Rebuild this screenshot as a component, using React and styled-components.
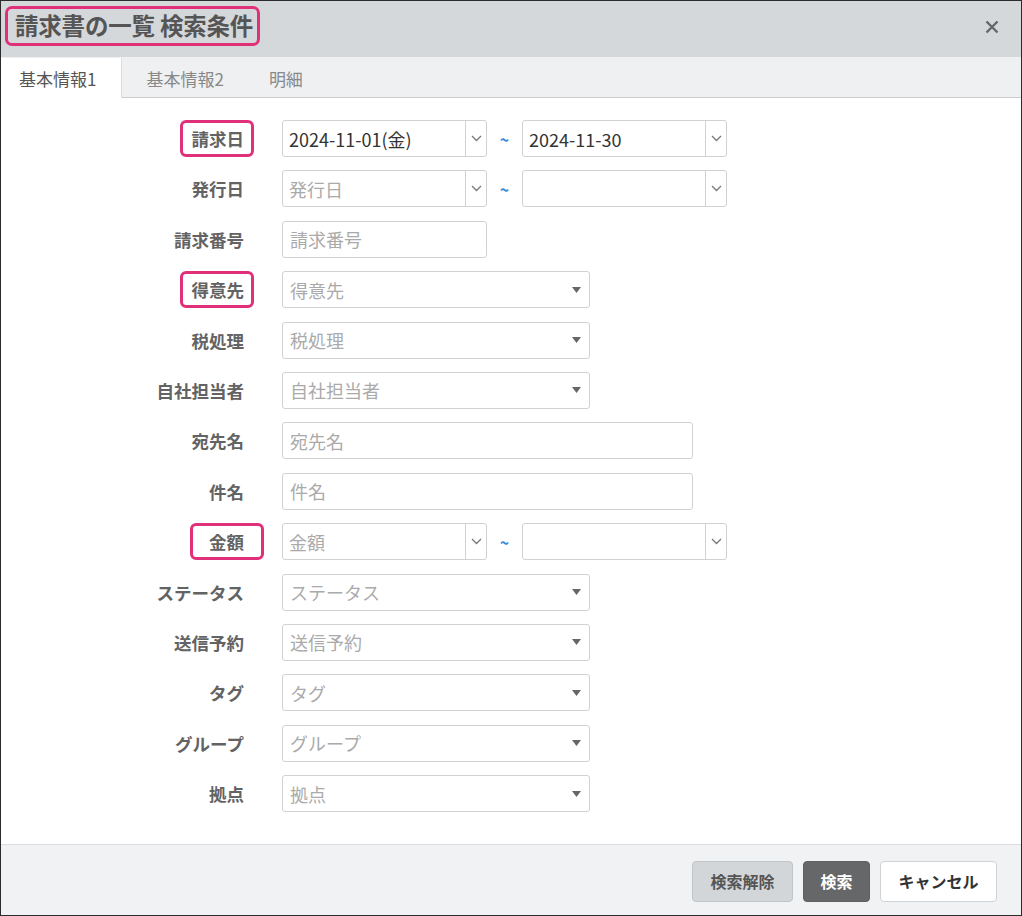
import React from 'react';
import styled, { createGlobalStyle } from 'styled-components';

const GlobalStyle = createGlobalStyle`
  * { box-sizing: border-box; }
  body {
    margin: 0;
    font-family: "Noto Sans CJK JP", "Noto Sans", sans-serif;
    color: #333;
  }
`;

const Dialog = styled.div`
  width: 1022px;
  height: 916px;
  border: 1px solid #2b2b2b;
  display: flex;
  flex-direction: column;
  background: #fff;
`;

const Header = styled.div`
  height: 56px;
  flex: none;
  background: #d5d8db;
  display: flex;
  align-items: center;
  justify-content: space-between;
  padding: 0 20px 0 4px;
`;

const Title = styled.h1`
  margin: 0;
  font-size: 23.5px;
  font-weight: 700;
  color: #555;
  height: 40px;
  line-height: 33px;
  padding: 0 4px 0 7px;
  border: 3px solid #e0307a;
  border-radius: 7px;
  margin-top: -6px;
  letter-spacing: -0.2px;
`;

const Close = styled.button`
  border: none;
  background: none;
  padding: 0;
  width: 18px;
  height: 18px;
  margin-top: -4px;
  display: flex;
  align-items: center;
  justify-content: center;
`;

const Tabs = styled.div`
  height: 41px;
  flex: none;
  background: #eef0f2;
  border-bottom: 1px solid #c9cbcd;
  display: flex;
  align-items: flex-end;
`;

const Tab = styled.div`
  height: 40px;
  padding: ${p => (p.active ? '0 25px 0 18px' : '0 21px 0 24px')};
  display: flex;
  align-items: center;
  font-size: 17px;
  color: ${p => (p.active ? '#555' : '#888')};
  background: ${p => (p.active ? '#fff' : 'transparent')};
  border-right: ${p => (p.active ? '1px solid #dcdcdc' : 'none')};
  margin-bottom: -1px;
`;

const Body = styled.div`
  flex: 1;
  padding-top: 22px;
  display: flex;
  flex-direction: column;
  gap: 13.4px;
`;

const Row = styled.div`
  display: flex;
  align-items: center;
  height: 37px;
`;

const Label = styled.div`
  width: 243px;
  flex: none;
  text-align: right;
  font-size: 17.5px;
  font-weight: 700;
  color: #636363;
  margin-right: 38px;
  display: flex;
  justify-content: flex-end;
`;

const Marked = styled.span`
  display: inline-block;
  height: 37px;
  line-height: 31px;
  padding: 0 ${p => p.pr}px 0 ${p => p.pl}px;
  margin-right: ${p => -p.pr - 3}px;
  border: 3px solid #e0307a;
  border-radius: 6px;
`;

const Box = styled.div`
  width: ${p => p.w}px;
  height: 37px;
  border: 1px solid #cfd2d5;
  border-radius: 3px;
  display: flex;
  align-items: center;
  padding: 0 8px 0 7px;
  font-size: 18px;
  color: ${p => (p.value ? '#333' : '#aaa')};
  background: #fff;
`;

const Grow = styled.span`
  flex: 1;
`;

const DateGroup = styled.div`
  width: 205px;
  height: 37px;
  display: flex;
  border: 1px solid #cfd2d5;
  border-radius: 3px;
  font-size: 18px;
`;

const DateText = styled.div`
  flex: 1;
  display: flex;
  align-items: center;
  padding-left: 6px;
  color: ${p => (p.value ? '#333' : '#aaa')};
`;

const DateButton = styled.div`
  width: 21px;
  border-left: 1px solid #cfd2d5;
  display: flex;
  align-items: center;
  justify-content: center;
`;

const Tilde = styled.span`
  width: 35px;
  text-align: center;
  color: #3b8de0;
  font-size: 16px;
  font-weight: 700;
`;

const Footer = styled.div`
  height: 71px;
  flex: none;
  background: #f0f2f4;
  border-top: 1px solid #dadcde;
  display: flex;
  align-items: center;
  justify-content: flex-end;
  gap: 10px;
  padding: 2px 24px 0 0;
`;

const Button = styled.button`
  height: 41px;
  width: ${p => p.w}px;
  border-radius: 4px;
  font-family: inherit;
  font-size: 16px;
  font-weight: 700;
  border: 1px solid ${p => (p.kind === 'dark' ? '#5f6062' : p.kind === 'gray' ? '#c2c5c8' : '#d0d3d6')};
  background: ${p => (p.kind === 'dark' ? '#666769' : p.kind === 'gray' ? '#d3d6d9' : '#fff')};
  color: ${p => (p.kind === 'dark' ? '#fff' : p.kind === 'gray' ? '#555' : '#333')};
`;

const Chevron = () => (
  <svg width="11" height="7" viewBox="0 0 11 7">
    <polyline points="1,1 5.5,5.5 10,1" fill="none" stroke="#777" strokeWidth="1.3" />
  </svg>
);

const Caret = () => (
  <svg width="9" height="6" viewBox="0 0 9 6">
    <polygon points="0,0 9,0 4.5,6" fill="#666" />
  </svg>
);

const DateInput = ({ value, placeholder }) => (
  <DateGroup>
    <DateText value={value}>{value || placeholder}</DateText>
    <DateButton>
      <Chevron />
    </DateButton>
  </DateGroup>
);

const Range = ({ from, placeholder, to }) => (
  <>
    <DateInput value={from} placeholder={placeholder} />
    <Tilde>~</Tilde>
    <DateInput value={to} />
  </>
);

const Select = ({ placeholder }) => (
  <Box w={308}>
    <Grow>{placeholder}</Grow>
    <Caret />
  </Box>
);

const Field = ({ label, mark, children }) => (
  <Row>
    <Label>{mark ? <Marked pl={mark[0]} pr={mark[1]}>{label}</Marked> : label}</Label>
    {children}
  </Row>
);

export default function App() {
  return (
    <>
      <GlobalStyle />
      <Dialog>
        <Header>
          <Title>請求書の一覧 検索条件</Title>
          <Close>
            <svg width="14" height="14" viewBox="0 0 14 14">
              <path d="M1.5 1.5 L12.5 12.5 M12.5 1.5 L1.5 12.5" stroke="#666" strokeWidth="2.4" />
            </svg>
          </Close>
        </Header>
        <Tabs>
          <Tab active>基本情報1</Tab>
          <Tab>基本情報2</Tab>
          <Tab>明細</Tab>
        </Tabs>
        <Body>
          <Field label="請求日" mark={[9, 7]}>
            <Range from="2024-11-01(金)" to="2024-11-30" />
          </Field>
          <Field label="発行日">
            <Range placeholder="発行日" />
          </Field>
          <Field label="請求番号">
            <Box w={205}>請求番号</Box>
          </Field>
          <Field label="得意先" mark={[9, 7]}>
            <Select placeholder="得意先" />
          </Field>
          <Field label="税処理">
            <Select placeholder="税処理" />
          </Field>
          <Field label="自社担当者">
            <Select placeholder="自社担当者" />
          </Field>
          <Field label="宛先名">
            <Box w={411}>宛先名</Box>
          </Field>
          <Field label="件名">
            <Box w={411}>件名</Box>
          </Field>
          <Field label="金額" mark={[16, 17]}>
            <Range placeholder="金額" />
          </Field>
          <Field label="ステータス">
            <Select placeholder="ステータス" />
          </Field>
          <Field label="送信予約">
            <Select placeholder="送信予約" />
          </Field>
          <Field label="タグ">
            <Select placeholder="タグ" />
          </Field>
          <Field label="グループ">
            <Select placeholder="グループ" />
          </Field>
          <Field label="拠点">
            <Select placeholder="拠点" />
          </Field>
        </Body>
        <Footer>
          <Button kind="gray" w={101}>検索解除</Button>
          <Button kind="dark" w={67}>検索</Button>
          <Button w={117}>キャンセル</Button>
        </Footer>
      </Dialog>
    </>
  );
}
